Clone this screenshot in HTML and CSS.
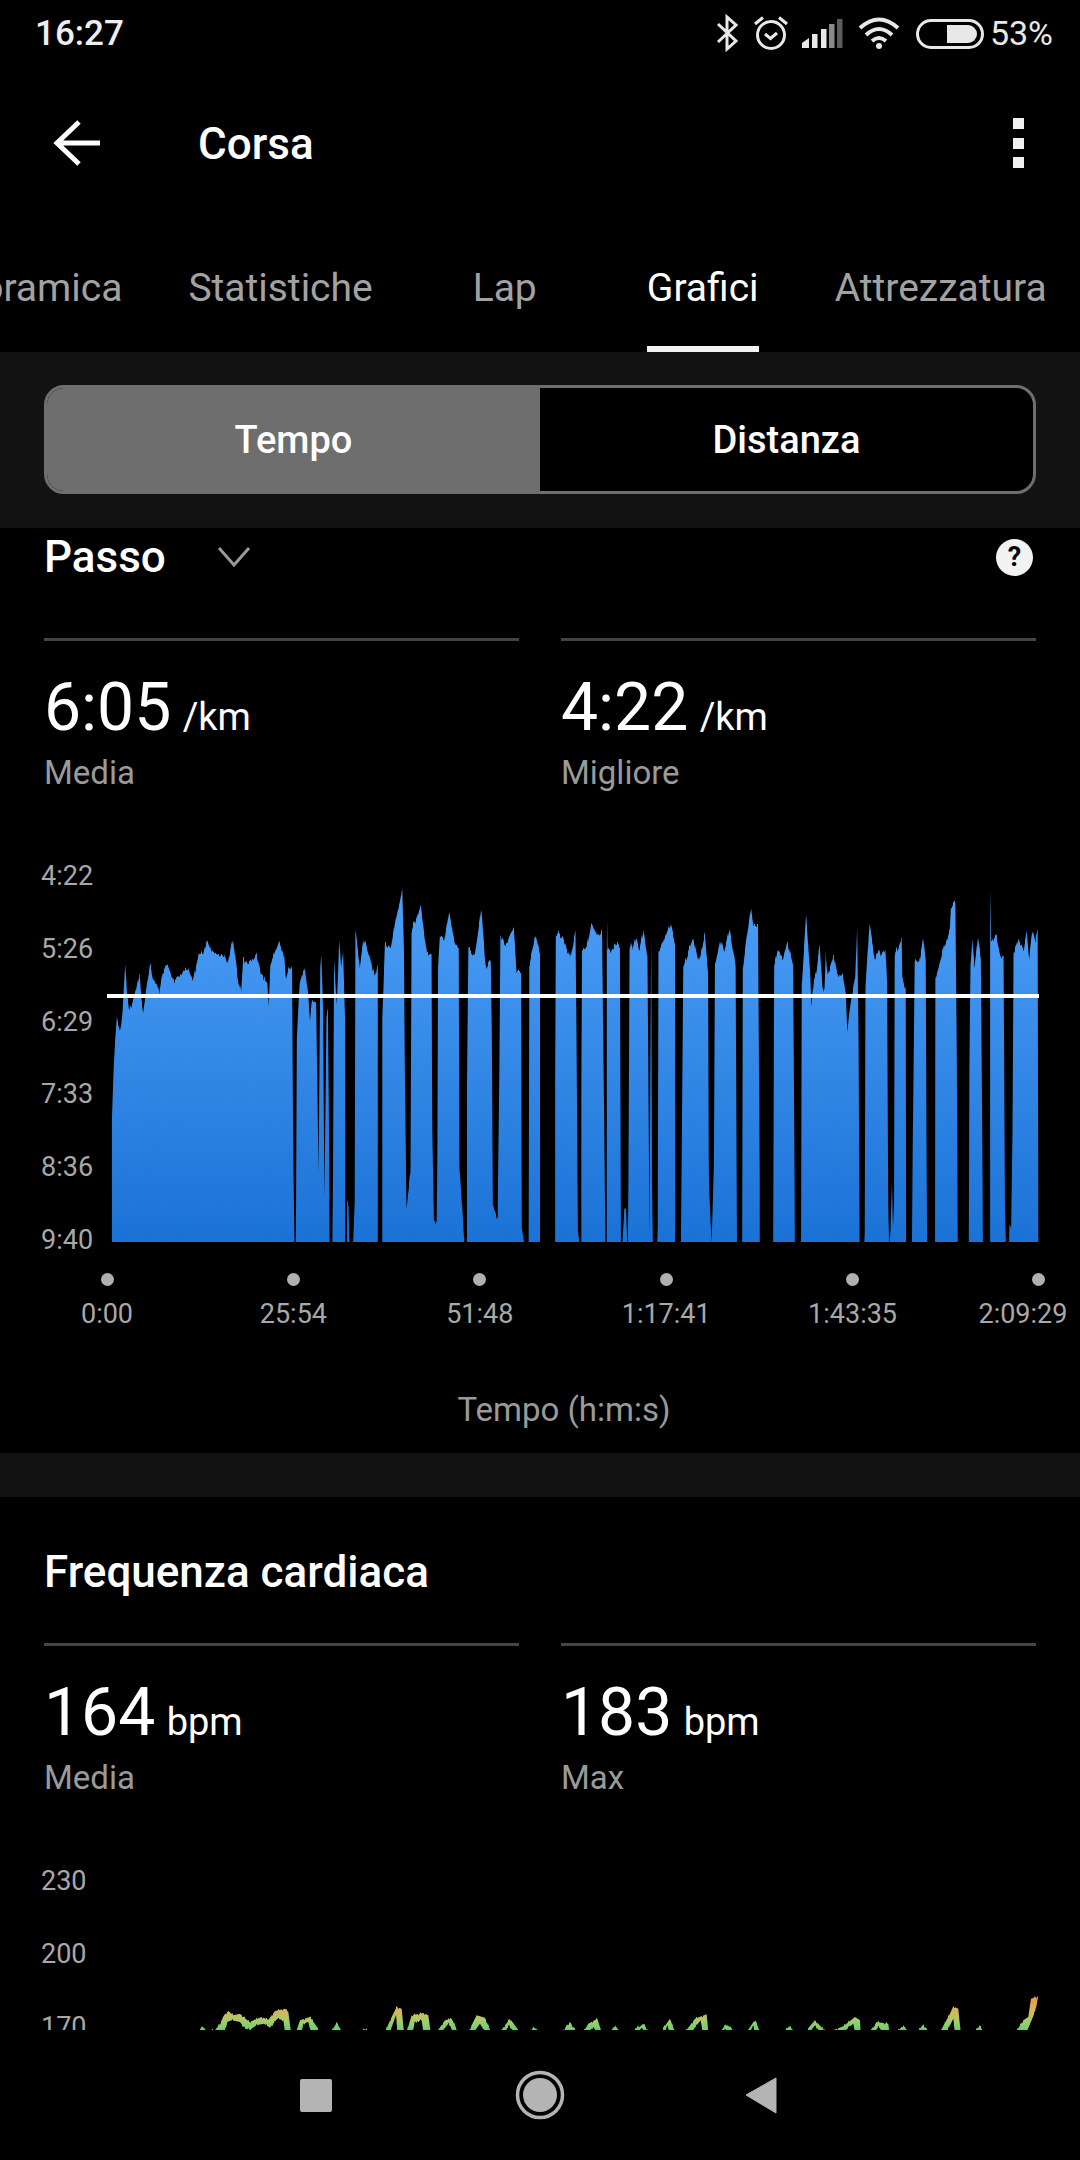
FILE: index.html
```html
<!DOCTYPE html>
<html lang="it">
<head>
  <meta charset="UTF-8">
  <title>Corsa - Grafici</title>
  <meta name="viewport" content="width=device-width, initial-scale=1.0">
  <link rel="stylesheet" href="styles.css">
</head>
<body>

<div class="phone">

  <!-- Status bar -->
  <div class="status">
    <span class="clock">16:27</span>
    <div class="status-icons">
      <svg class="ico-bt" viewBox="716 14 24 38"><path d="M719 24 L737 41 L728 49 V17 L737 25 L719 42" fill="none" stroke="#e8e8e8" stroke-width="3"/></svg>
      <svg class="ico-alarm" viewBox="754 14 36 38">
        <circle cx="772" cy="35" r="13.5" fill="none" stroke="#e8e8e8" stroke-width="3"/>
        <path d="M766 34 L771.500 38.500 L778 33" fill="none" stroke="#e8e8e8" stroke-width="3"/>
        <path d="M756 24 L764 17.500 M780 17.500 L788 24" fill="none" stroke="#e8e8e8" stroke-width="3"/>
      </svg>
      <svg class="ico-signal" viewBox="802 14 42 36">
        <path d="M803 47 V42 L810 37 V47 Z" fill="#e8e8e8"/>
        <rect x="813" y="33" width="5.500" height="14" fill="#e8e8e8"/>
        <rect x="822" y="28" width="5.500" height="19" fill="#e8e8e8"/>
        <rect x="830" y="23" width="5.500" height="24" fill="#8a8a8a"/>
        <rect x="838" y="18" width="5.500" height="29" fill="#5c5c5c"/>
      </svg>
      <svg class="ico-wifi" viewBox="858 14 44 36">
        <path d="M861 27 Q880 10 899 27 M867 34 Q880 22 893 34 M873 40 Q880 34 887 40" fill="none" stroke="#e8e8e8" stroke-width="4"/>
        <circle cx="880" cy="45" r="3" fill="#e8e8e8"/>
      </svg>
      <svg class="ico-batt" viewBox="916 16 70 33">
        <rect x="918.500" y="19.500" width="65" height="27" rx="13.500" fill="none" stroke="#e8e8e8" stroke-width="3"/>
        <path d="M948 24 H969 A9 9 0 0 1 969 42 H948 Z" fill="#e8e8e8"/>
      </svg>
      <span class="batt-text">53%</span>
    </div>
  </div>

  <!-- App bar -->
  <div class="appbar">
    <svg class="back" viewBox="52 118 52 50"><path d="M100 143 H58 M79 122 L57 143 L79 164" fill="none" stroke="#fff" stroke-width="5"/></svg>
    <span class="appbar-title">Corsa</span>
    <div class="menu"><i></i><i></i><i></i></div>
  </div>

  <!-- Tabs -->
  <div class="tabs">
    <div class="tab"><span>Panoramica</span></div>
    <div class="tab"><span>Statistiche</span></div>
    <div class="tab"><span>Lap</span></div>
    <div class="tab active"><span>Grafici</span></div>
    <div class="tab"><span>Attrezzatura</span></div>
  </div>

  <div class="band">
    <div class="toggle">
      <div class="toggle-item on">Tempo</div>
      <div class="toggle-item">Distanza</div>
    </div>
  </div>

  <div class="scroll">

    <!-- Passo -->
    <section class="card">
      <div class="metric-head">
        <span class="metric-title">Passo</span>
        <svg class="chev" viewBox="215 545 36 24"><path d="M218 548 L233 565 L248 548" fill="none" stroke="#9a9a9a" stroke-width="3"/></svg>
        <span class="help">?</span>
      </div>

      <div class="stats">
        <div class="stat">
          <div class="stat-value">6:05 <small>/km</small></div>
          <div class="stat-label">Media</div>
        </div>
        <div class="stat">
          <div class="stat-value">4:22 <small>/km</small></div>
          <div class="stat-label">Migliore</div>
        </div>
      </div>

      <div class="chart">
        <div class="y-axis">
          <span>4:22</span><span>5:26</span><span>6:29</span><span>7:33</span><span>8:36</span><span>9:40</span>
        </div>
        <svg class="plot" viewBox="104 859 976 382">
          <defs>
            <linearGradient id="pace" gradientUnits="userSpaceOnUse" x1="0" y1="110" x2="0" y2="1172">
              <stop offset="0" stop-color="#4c9ff7"/>
              <stop offset="1" stop-color="#1b72d6"/>
            </linearGradient>
            <!-- vertical-only jitter, the data is noisy -->
            <filter id="rough" filterUnits="userSpaceOnUse" x="0" y="800" width="1080" height="500" color-interpolation-filters="sRGB">
              <feTurbulence type="fractalNoise" baseFrequency="0.45 0.004" numOctaves="2" seed="7"/>
              <feColorMatrix type="matrix" values="1 0 0 0 0  0 0 0 0 0.5  0 0 0 0 0  0 0 0 0 1" result="map"/>
              <feDisplacementMap in="SourceGraphic" in2="map" scale="13" xChannelSelector="G" yChannelSelector="R"/>
            </filter>
          </defs>
          <g filter="url(#rough)">
            <g transform="translate(0,850) scale(.3444,.3333)" fill="url(#pace)">
              <path d="M325 1190 V800 L330 650 L335 560 L340 500 L350 545 L356 480 L360 400 L364 330 L368 420 L375 480 L385 450 L395 420 L405 365 L410 440 L416 485 L425 410 L437 335 L445 385 L455 400 L462 430 L472 365 L487 340 L505 390 L525 370 L545 350 L560 390 L578 310 L590 305 L602 265 L612 300 L650 315 L660 340 L677 265 L690 380 L700 425 L706 320 L720 340 L745 315 L760 370 L776 400 L780 465 L785 340 L810 270 L825 320 L830 385 L838 345 L848 360 L851 860 L855 1190 Z"/>
              <path d="M859 1190 L862 560 L870 400 L885 345 L895 430 L900 510 L905 455 L918 450 L925 965 L930 350 L933 310 L938 480 L942 1040 L948 500 L952 480 L955 800 L957 1190 Z"/>
              <path d="M965 1190 L967 960 L970 325 L978 465 L985 270 L990 350 L996 300 L1002 500 V1190 Z"/>
              <path d="M1008 1190 V1050 L1012 1060 L1015 1190 Z"/>
              <path d="M1025 1190 L1030 1050 L1032 235 L1045 345 L1057 260 L1075 320 L1087 380 L1097 340 V1190 Z"/>
              <path d="M1110 1190 V500 L1118 275 L1135 295 L1150 200 L1168 110 L1173 300 L1175 600 L1180 1070 L1192 960 L1195 240 L1222 165 L1240 310 L1253 300 L1255 830 L1258 1000 L1260 1115 L1268 1115 L1270 900 L1272 350 L1277 255 L1290 270 L1305 180 L1320 270 L1332 290 L1334 950 L1340 1040 L1348 1165 V1190 Z"/>
              <path d="M1356 1190 V700 L1360 290 L1378 315 L1398 170 L1410 350 L1425 325 L1428 550 L1431 1060 L1445 1105 L1450 650 L1453 255 L1465 280 L1492 235 L1500 360 L1513 360 L1515 1130 L1524 1190 Z"/>
              <path d="M1535 1190 L1537 340 L1555 255 L1568 310 V1190 Z"/>
            </g>
            <g transform="translate(540,850) scale(.3444,.3333)" fill="url(#pace)">
              <path d="M44 1190 V710 L46 245 L65 255 L88 320 L103 240 L106 550 L110 1140 L116 1190 Z"/>
              <path d="M120 1190 V740 L122 295 L135 295 L148 215 L170 255 L180 235 L183 510 L186 780 L190 1190 Z"/>
              <path d="M194 1190 V300 L195 205 L196 295 L205 305 L220 270 L232 285 L235 1190 Z"/>
              <path d="M238 1190 L245 1075 L250 1080 L254 1190 Z"/>
              <path d="M255 1190 L257 950 L260 310 L265 270 L270 295 L280 255 L288 295 L300 235 L312 320 L318 1150 L322 390 L323 255 L325 990 L328 1190 Z"/>
              <path d="M340 1190 L342 1120 L344 310 L378 215 L392 275 V1190 Z"/>
              <path d="M409 1190 L411 970 L416 345 L445 260 L460 335 L478 255 L488 360 L490 930 L491 1010 L498 1170 L500 1115 L505 950 L508 340 L525 260 L535 300 L550 235 L568 345 L572 1190 Z"/>
              <path d="M587 1190 L589 350 L612 165 L620 225 L633 225 L638 980 V1190 Z"/>
              <path d="M677 1190 L680 340 L690 295 L705 325 L718 270 L735 340 L739 960 L740 1190 Z"/>
              <path d="M758 1190 L760 400 L773 195 L785 380 L788 465 L795 385 L803 360 L812 285 L820 405 L826 425 L830 310 L835 370 L852 315 L862 365 L880 375 L888 430 L892 540 L900 470 L915 380 L921 225 L925 570 L928 1190 Z"/>
              <path d="M941 1190 L943 1145 L945 410 L957 215 L972 320 L983 290 L990 320 L1003 290 L1008 400 L1011 1060 L1014 1190 L1018 1130 L1022 990 L1025 1130 L1028 1050 L1030 315 L1050 265 L1052 380 L1062 420 L1063 1190 Z"/>
              <path d="M1080 1190 L1082 915 L1088 330 L1100 335 L1113 265 L1120 330 L1122 820 L1124 1190 Z"/>
              <path d="M1147 1190 L1148 380 L1165 320 L1190 235 L1193 165 L1206 150 L1210 580 L1213 1190 Z"/>
              <path d="M1245 1190 L1247 640 L1250 340 L1255 265 L1262 345 L1272 265 L1280 315 L1285 980 L1286 1190 Z"/>
              <path d="M1307 1190 V300 L1308 110 L1310 265 L1325 255 L1340 320 L1346 310 L1350 1075 L1353 1190 Z"/>
              <path d="M1362 1190 L1363 1120 L1368 1135 L1372 840 L1375 310 L1390 260 L1405 295 L1413 235 L1420 320 L1430 235 L1438 270 L1445 235 L1447 1190 Z"/>
            </g>
          </g>
          <rect x="107" y="993" width="932" height="4" fill="#fff"/>
        </svg>
      </div>

      <div class="x-axis dots"><i></i><i></i><i></i><i></i><i></i><i></i></div>
      <div class="x-axis ticks">
        <span>0:00</span><span>25:54</span><span>51:48</span><span>1:17:41</span><span>1:43:35</span><span>2:09:29</span>
      </div>
      <div class="axis-title">Tempo (h:m:s)</div>
    </section>

    <div class="divider"></div>

    <!-- Frequenza cardiaca -->
    <section class="card card-hr">
      <div class="card-title">Frequenza cardiaca</div>

      <div class="stats">
        <div class="stat">
          <div class="stat-value">164 <small>bpm</small></div>
          <div class="stat-label">Media</div>
        </div>
        <div class="stat">
          <div class="stat-value">183 <small>bpm</small></div>
          <div class="stat-label">Max</div>
        </div>
      </div>

      <div class="chart">
        <div class="y-axis y-axis-hr">
          <span>230</span><span>200</span><span>170</span>
        </div>
        <svg class="plot-hr" viewBox="104 1864 976 166">
          <defs>
            <linearGradient id="heart" gradientUnits="userSpaceOnUse" x1="0" y1="28" x2="0" y2="135">
              <stop offset="0" stop-color="#f0963c"/>
              <stop offset=".4" stop-color="#d8b65a"/>
              <stop offset=".7" stop-color="#a4cc6a"/>
              <stop offset=".95" stop-color="#66cf72"/>
            </linearGradient>
            <filter id="rough-hr" filterUnits="userSpaceOnUse" x="0" y="1950" width="1080" height="120" color-interpolation-filters="sRGB">
              <feTurbulence type="fractalNoise" baseFrequency="0.5 0.004" numOctaves="2" seed="3"/>
              <feColorMatrix type="matrix" values="1 0 0 0 0  0 0 0 0 0.5  0 0 0 0 0  0 0 0 0 1" result="map"/>
              <feDisplacementMap in="SourceGraphic" in2="map" scale="5" xChannelSelector="G" yChannelSelector="R"/>
            </filter>
          </defs>
          <g filter="url(#rough-hr)">
            <g transform="translate(190,1986) scale(.3333)" fill="url(#heart)">
              <path d="M25 135 L38 115 L50 135 Z"/>
              <path d="M55 135 L65 128 L75 130 L90 110 L102 85 L115 72 L130 85 L150 80 L178 105 L215 90 L235 98 L255 72 L285 65 L295 75 L303 135 H285 L280 100 L262 95 L240 122 L222 110 L200 115 L180 128 L165 125 L150 105 L125 100 L112 105 L103 135 Z"/>
              <path d="M318 135 L330 100 L360 90 L385 125 L390 135 H362 L355 105 L340 110 L335 135 Z"/>
              <path d="M423 135 L440 108 L457 135 Z"/>
              <path d="M503 135 L520 125 L550 135 Z"/>
              <path d="M585 135 L605 90 L620 60 L635 65 L642 135 H622 L618 85 L600 135 Z"/>
              <path d="M650 135 L665 85 L700 78 L715 85 L722 135 H700 L695 100 L675 105 L668 135 Z"/>
              <path d="M740 135 L765 100 L785 95 L805 135 H790 L775 110 L755 135 Z"/>
              <path d="M835 135 L860 85 L885 92 L903 135 H885 L870 110 L852 135 Z"/>
              <path d="M930 135 L960 95 L990 135 H970 L958 115 L945 135 Z"/>
              <path d="M1020 135 L1032 118 L1044 135 Z"/>
              <path d="M1115 135 L1140 105 L1160 135 Z"/>
              <path d="M1180 135 L1195 110 L1222 95 L1235 135 H1220 L1210 120 L1195 135 Z"/>
              <path d="M1260 135 L1275 115 L1290 135 Z"/>
              <path d="M1325 135 L1345 115 L1350 135 Z"/>
            </g>
            <g transform="translate(630,1986) scale(.3333)" fill="url(#heart)">
              <path d="M10 135 L40 110 L58 135 H45 L35 122 L25 135 Z"/>
              <path d="M92 135 L120 95 L135 135 H120 L112 115 L105 135 Z"/>
              <path d="M165 135 L195 95 L230 82 L235 135 H218 L212 100 L185 135 Z"/>
              <path d="M270 135 L288 112 L320 135 H300 L288 125 L280 135 Z"/>
              <path d="M350 135 L375 98 L390 135 H375 L370 115 L360 135 Z"/>
              <path d="M460 135 L478 118 L495 135 Z"/>
              <path d="M525 135 L555 100 L588 135 H570 L555 115 L540 135 Z"/>
              <path d="M595 135 L640 118 L675 90 L690 100 L692 135 H675 L670 110 L640 135 Z"/>
              <path d="M718 135 L740 105 L775 110 L778 135 H760 L745 120 L735 135 Z"/>
              <path d="M800 135 L820 115 L835 135 Z"/>
              <path d="M862 135 L880 112 L895 135 Z"/>
              <path d="M930 135 L960 80 L970 58 L985 65 L992 135 H975 L970 95 L950 135 Z"/>
              <path d="M1035 135 L1048 115 L1062 135 Z"/>
              <path d="M1158 135 L1180 100 L1195 90 L1203 35 L1225 28 L1215 75 L1205 100 L1190 135 H1175 Z"/>
            </g>
          </g>
        </svg>
      </div>
    </section>
  </div>

  <!-- Android nav -->
  <div class="navbar">
    <svg class="nav-svg" viewBox="0 2030 1080 130">
      <rect x="300" y="2079" width="32" height="33" rx="2" fill="#b4b4b4"/>
      <circle cx="540" cy="2095" r="22.500" fill="none" stroke="#b4b4b4" stroke-width="3.500"/>
      <circle cx="540" cy="2095" r="17" fill="#b4b4b4"/>
      <path d="M776 2078 V2113 L746 2095 Z" fill="#b4b4b4" stroke="#b4b4b4" stroke-width="1" stroke-linejoin="round"/>
    </svg>
  </div>
</div>

</body>
</html>
```

FILE: styles.css
```css
* { box-sizing: border-box; }
body {
  margin: 0;
  background: #000;
  color: #fff;
  font-family: Roboto, "Noto Sans", sans-serif;
}
.phone {
  width: 1080px;
  height: 2160px;
  display: flex;
  flex-direction: column;
  overflow: hidden;
  background: #000;
}

/* status bar */
.status {
  height: 66px;
  flex-shrink: 0;
  display: flex;
  align-items: center;
  justify-content: space-between;
  padding: 0 27px 0 35px;
}
.clock {
  font-size: 35px;
  font-weight: 500;
  color: #eee;
}
.status-icons {
  display: flex;
  align-items: center;
}
.status-icons svg { display: block; }
.ico-bt { width: 24px; height: 38px; }
.ico-alarm { width: 36px; height: 38px; margin-left: 14px; }
.ico-signal { width: 42px; height: 36px; margin-left: 12px; }
.ico-wifi { width: 44px; height: 36px; margin-left: 14px; }
.ico-batt { width: 70px; height: 33px; margin-left: 14px; }
.batt-text {
  font-size: 34px;
  color: #e8e8e8;
  margin-left: 5px;
}

/* app bar */
.appbar {
  height: 154px;
  flex-shrink: 0;
  display: flex;
  align-items: center;
  padding: 0 56px 0 52px;
}
.back { width: 52px; height: 50px; }
.appbar-title {
  font-size: 44px;
  font-weight: 500;
  margin-left: 94px;
  padding-top: 2px;
}
.menu {
  margin-left: auto;
  display: flex;
  flex-direction: column;
  gap: 8.5px;
}
.menu i {
  display: block;
  width: 11px;
  height: 11px;
  background: #f0f0f0;
}

/* tabs */
.tabs {
  height: 132px;
  flex-shrink: 0;
  display: flex;
  margin-left: -119px;
}
.tab {
  flex-shrink: 0;
  min-width: 198px;
  padding: 0 33px;
  text-align: center;
  font-size: 39px;
  color: #a2a2a2;
}
.tab span {
  display: inline-block;
  height: 132px;
  line-height: 136px;
}
.tab.active { color: #fff; }
.tab.active span { border-bottom: 6px solid #f2f2f2; }

/* time / distance switch */
.band {
  height: 176px;
  flex-shrink: 0;
  padding: 33px 44px 0;
  background: #121212;
}
.toggle {
  height: 109px;
  display: flex;
  border: 3px solid #6e6e6e;
  border-radius: 20px;
  overflow: hidden;
  background: #000;
}
.toggle-item {
  flex: 1;
  text-align: center;
  line-height: 105px;
  font-size: 38px;
  font-weight: 500;
}
.toggle-item.on { background: #6e6e6e; }

/* scrolling content */
.scroll {
  flex: 1;
  overflow: hidden;
}
.card { padding: 0 44px; }
.metric-head {
  height: 58px;
  display: flex;
  align-items: center;
  margin-bottom: 52px;
}
.metric-title {
  font-size: 44px;
  font-weight: 500;
}
.chev {
  width: 36px;
  height: 24px;
  margin-left: 50px;
}
.help {
  margin-left: auto;
  margin-right: 3px;
  width: 37px;
  height: 37px;
  border-radius: 50%;
  background: #f2f2f2;
  color: #000;
  font-size: 27px;
  font-weight: 700;
  line-height: 37px;
  text-align: center;
}
.card-title {
  font-size: 44px;
  font-weight: 500;
  line-height: 56px;
  margin-bottom: 43px;
}
.card-hr { padding-top: 47px; }

.stats {
  display: grid;
  grid-template-columns: 475px 475px;
  gap: 42px;
}
.stat {
  border-top: 3px solid #444;
  padding-top: 29px;
}
.stat-value {
  font-size: 66px;
  line-height: 76px;
}
.stat-value small {
  font-size: 38px;
  margin-left: -5px;
}
.stat-label {
  margin-top: -2px;
  font-size: 33px;
  line-height: 40px;
  color: #9a9a9a;
}

/* charts */
.chart {
  display: flex;
  align-items: flex-start;
  margin: 67px -44px 0;
}
.y-axis {
  width: 104px;
  height: 396px;
  flex-shrink: 0;
  padding-left: 41px;
  display: flex;
  flex-direction: column;
  justify-content: space-between;
  font-size: 27px;
  line-height: 32px;
  color: #a8a8a8;
}
.y-axis-hr {
  height: auto;
  justify-content: flex-start;
  gap: 41px;
}
.plot {
  width: 976px;
  height: 382px;
  display: block;
  flex-shrink: 0;
}
.plot-hr {
  width: 976px;
  height: 166px;
  display: block;
  flex-shrink: 0;
}
.x-axis {
  display: flex;
  justify-content: space-between;
  margin: 0 -3px 0 63px;
}
.dots { margin-top: 17px; height: 13px; }
.dots i {
  display: block;
  width: 13px;
  height: 13px;
  margin: 0 -6px;
  border-radius: 50%;
  background: #b0b0b0;
}
.ticks {
  margin-top: 12px;
  font-size: 27px;
  line-height: 32px;
  color: #a8a8a8;
}
.ticks span {
  width: 0;
  display: flex;
  justify-content: center;
  white-space: nowrap;
}
/* last label is pulled in so it stays on screen */
.ticks span:last-child::after {
  content: "";
  flex-shrink: 0;
  width: 32px;
}
.axis-title {
  margin-top: 60px;
  padding-bottom: 23px;
  text-align: center;
  margin-left: 48px;
  font-size: 33px;
  line-height: 40px;
  color: #9a9a9a;
}
.divider {
  height: 44px;
  background: #121212;
}

/* bottom navigation */
.navbar {
  height: 130px;
  flex-shrink: 0;
  background: #000;
}
.nav-svg {
  display: block;
  width: 1080px;
  height: 130px;
}
```
